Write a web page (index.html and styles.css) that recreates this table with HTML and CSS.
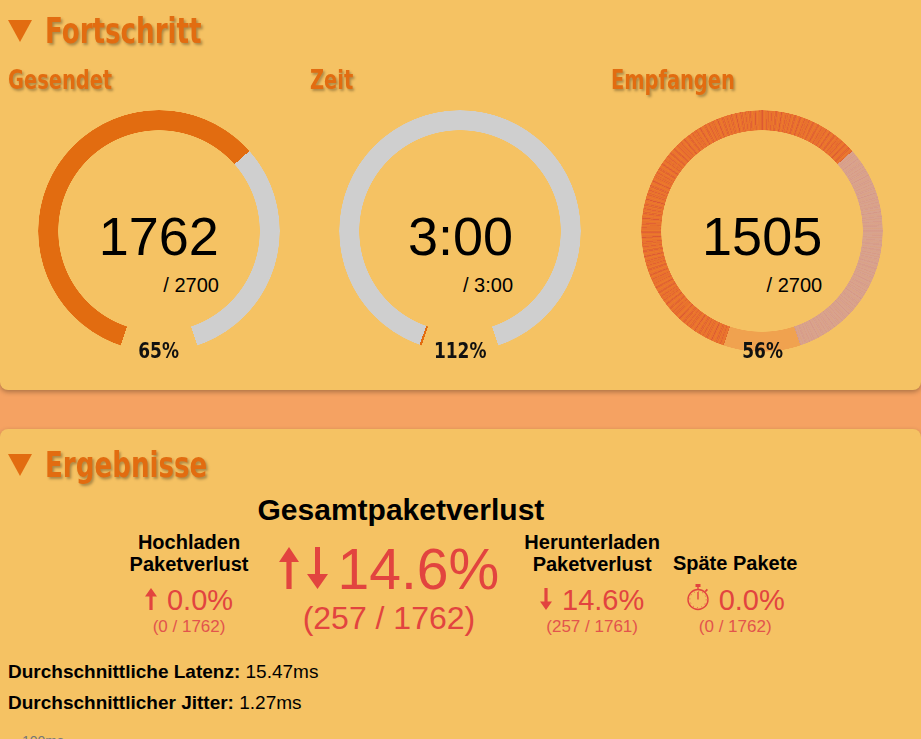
FILE: index.html
```html
<!DOCTYPE html>
<html lang="de">
<head>
<meta charset="utf-8">
<title>Fortschritt</title>
<link rel="stylesheet" href="styles.css">
</head>
<body>
<section class="card card-progress">
  <div class="section-head">
    <svg class="caret" viewBox="0 0 24 22"><polygon points="0,0 24,0 12,22"/></svg>
    <h2 class="section-title">Fortschritt</h2>
  </div>
  <div class="gauges">
    <div class="gauge-col">
      <div class="gauge-label">Gesendet</div>
      <div class="gauge gauge-sent">
        <div class="gauge-value">
          <div class="gauge-big">1762</div>
          <div class="gauge-sub">/ 2700</div>
        </div>
      </div>
      <div class="gauge-pct">65%</div>
    </div>
    <div class="gauge-col">
      <div class="gauge-label">Zeit</div>
      <div class="gauge gauge-time">
        <div class="gauge-value">
          <div class="gauge-big">3:00</div>
          <div class="gauge-sub">/ 3:00</div>
        </div>
      </div>
      <div class="gauge-pct">112%</div>
    </div>
    <div class="gauge-col">
      <div class="gauge-label">Empfangen</div>
      <div class="gauge gauge-recv">
        <div class="gauge-value">
          <div class="gauge-big">1505</div>
          <div class="gauge-sub">/ 2700</div>
        </div>
      </div>
      <div class="gauge-pct">56%</div>
    </div>
  </div>
</section>

<section class="card card-results">
  <div class="section-head">
    <svg class="caret" viewBox="0 0 24 22"><polygon points="0,0 24,0 12,22"/></svg>
    <h2 class="section-title">Ergebnisse</h2>
  </div>
  <div class="loss-row">
    <div class="loss-item loss-up">
      <div class="loss-title">Hochladen<br>Paketverlust</div>
      <div class="loss-value"><svg class="arrow-sm" viewBox="0 0 12 22"><polygon points="6,0 12,8.5 7.6,8.5 7.6,22 4.4,22 4.4,8.5 0,8.5"/></svg>0.0%</div>
      <div class="loss-count">(0 / 1762)</div>
    </div>
    <div class="loss-item loss-total">
      <h3 class="loss-heading">Gesamtpaketverlust</h3>
      <div class="loss-value-big"><svg class="arrow-lg arrow-lg-up" viewBox="0 0 20 42"><polygon points="10,0 20,15 12.6,15 12.6,42 7.4,42 7.4,15 0,15"/></svg><svg class="arrow-lg arrow-lg-down" viewBox="0 0 21 42"><polygon points="8,0 13,0 13,27 21,27 10.5,42 0,27 8,27"/></svg>14.6%</div>
      <div class="loss-count-big">(257 / 1762)</div>
    </div>
    <div class="loss-item loss-down">
      <div class="loss-title">Herunterladen<br>Paketverlust</div>
      <div class="loss-value"><svg class="arrow-sm" viewBox="0 0 12 22"><polygon points="4.4,0 7.6,0 7.6,13.5 12,13.5 6,22 0,13.5 4.4,13.5"/></svg>14.6%</div>
      <div class="loss-count">(257 / 1761)</div>
    </div>
    <div class="loss-item loss-late">
      <div class="loss-title">Späte Pakete</div>
      <div class="loss-value"><svg class="stopwatch" viewBox="0 0 24 28"><rect x="9.5" y="1" width="5" height="3" class="sw-fill"/><line x1="12" y1="4" x2="12" y2="6.5"/><circle cx="12" cy="16.5" r="10"/><circle cx="12" cy="16.5" r="8.2" class="sw-ticks"/><line x1="12" y1="16.5" x2="12" y2="9"/><line x1="19.2" y1="8.6" x2="21.4" y2="6.4" class="sw-knob"/></svg>0.0%</div>
      <div class="loss-count">(0 / 1762)</div>
    </div>
  </div>
  <p class="metric"><b>Durchschnittliche Latenz:</b> 15.47ms</p>
  <p class="metric metric-second"><b>Durchschnittlicher Jitter:</b> 1.27ms</p>
  <div class="chart"><span class="axis-label">100ms</span></div>
</section>
</body>
</html>
```

FILE: styles.css
```css
html, body {
  margin: 0;
  padding: 0;
}

body {
  background: #f5a262;
  font-family: "Liberation Sans", Arial, sans-serif;
  color: #000;
  overflow: hidden;
}

.card {
  background: #f5c263;
  box-shadow: 0 2px 5px rgba(0, 0, 0, 0.3);
  padding: 11px 8px 29px;
}

.card-progress {
  border-radius: 0 0 8px 8px;
}

.card-results {
  margin-top: 39px;
  border-radius: 8px 8px 0 0;
  padding-top: 16px;
  min-height: 400px;
}

.section-head {
  display: flex;
  align-items: center;
  height: 40px;
}

.caret {
  width: 24px;
  height: 22px;
  fill: #e26c10;
  flex: none;
}

.section-title {
  margin: 0 0 0 13px;
  font-family: "DejaVu Sans Condensed", "DejaVu Sans", sans-serif;
  font-weight: bold;
  font-size: 35px;
  line-height: 40px;
  color: #e26c10;
  text-shadow: 2px 2px 3px rgba(0, 0, 0, 0.3);
  transform: scaleX(0.83);
  transform-origin: left center;
  white-space: nowrap;
}

/* gauges */
.gauges {
  display: grid;
  grid-template-columns: repeat(3, 1fr);
  margin-top: 12.6px;
}

.gauge-col {
  display: flex;
  flex-direction: column;
  align-items: center;
}

.gauge-label {
  align-self: stretch;
  font-family: "DejaVu Sans Condensed", "DejaVu Sans", sans-serif;
  font-weight: bold;
  font-size: 27px;
  line-height: 32px;
  color: #e26c10;
  text-shadow: 2px 2px 3px rgba(0, 0, 0, 0.3);
  transform: scaleX(0.8);
  transform-origin: left center;
  white-space: nowrap;
}

.gauge {
  margin-top: 14.4px;
  width: 242px;
  height: 242px;
  box-sizing: border-box;
  padding-top: 95px;
  position: relative;
  display: flex;
  justify-content: center;
  align-items: flex-start;
}

.gauge::before {
  content: "";
  position: absolute;
  inset: 0;
  border-radius: 50%;
  -webkit-mask: radial-gradient(closest-side, transparent calc(100% - 20.5px), #000 calc(100% - 20px), #000 calc(100% - 0.5px), transparent 100%);
  mask: radial-gradient(closest-side, transparent calc(100% - 20.5px), #000 calc(100% - 20px), #000 calc(100% - 0.5px), transparent 100%);
}

.gauge-sent::before {
  background: conic-gradient(#e26c10 0deg 48.5deg, #cfcfcf 48.5deg 161.5deg, transparent 161.5deg 198.5deg, #e26c10 198.5deg 360deg);
}

.gauge-time::before {
  background: conic-gradient(#cfcfcf 0deg 161.5deg, transparent 161.5deg 198.5deg, #e26c10 198.5deg 199.6deg, #cfcfcf 199.6deg 360deg);
}

.gauge-recv::before {
  background:
    conic-gradient(transparent 0deg 48.5deg, rgba(216, 164, 142, 0.72) 48.5deg 161.5deg, #f0a24f 161.5deg 198.5deg, transparent 198.5deg 360deg),
    repeating-conic-gradient(rgba(200, 30, 70, 0.2) 0deg 0.35deg, transparent 0.35deg 1.1deg, rgba(255, 150, 30, 0.18) 1.1deg 1.6deg, transparent 1.6deg 2.3deg),
    repeating-conic-gradient(rgba(190, 40, 40, 0.14) 0deg 0.5deg, transparent 0.5deg 1.7deg, rgba(240, 120, 20, 0.14) 1.7deg 2.2deg, transparent 2.2deg 3.1deg),
    conic-gradient(#e8722f 0deg 48.5deg, #d9a08e 48.5deg 161.5deg, transparent 161.5deg 198.5deg, #e8722f 198.5deg 360deg);
}

.gauge-value {
  position: relative;
  display: flex;
  flex-direction: column;
  align-items: flex-end;
}

.gauge-big {
  font-size: 54px;
  line-height: normal;
}

.gauge-sub {
  font-size: 20px;
  line-height: normal;
  margin-top: 7px;
}

.gauge-pct {
  position: relative;
  margin-top: -11px;
  font-family: "DejaVu Sans Condensed", "DejaVu Sans", sans-serif;
  font-weight: bold;
  font-size: 21px;
  line-height: 20px;
  color: #111;
  transform: scaleX(0.9);
}

/* results */
.loss-row {
  display: flex;
  justify-content: center;
  align-items: flex-end;
  margin-top: 8.4px;
  padding-left: 6px;
}

.loss-item {
  text-align: center;
  flex: none;
}

.loss-up {
  margin-right: 30px;
}

.loss-total {
  margin-right: 25px;
}

.loss-down {
  margin-right: 13px;
}

.loss-title {
  font-weight: bold;
  font-size: 20px;
  line-height: 22px;
  white-space: nowrap;
}

.loss-value {
  margin-top: 9px;
  font-size: 29px;
  line-height: normal;
  color: #e2443f;
  white-space: nowrap;
}

.loss-count {
  font-size: 17px;
  line-height: normal;
  color: #e2544c;
  white-space: nowrap;
}

.loss-heading {
  margin: 0 -45px 0 -21px;
  font-size: 30px;
  line-height: normal;
  font-weight: bold;
  white-space: nowrap;
}

.loss-value-big {
  margin-top: 14px;
  font-size: 57px;
  line-height: 57px;
  color: #e2443f;
  white-space: nowrap;
}

.arrow-lg {
  height: 42px;
  fill: #e2443f;
  vertical-align: baseline;
}

.arrow-lg-up {
  width: 20px;
  margin-right: 8px;
}

.arrow-lg-down {
  width: 21px;
  margin-right: 10px;
}

.arrow-sm {
  width: 12px;
  height: 22px;
  margin-right: 10px;
  fill: #e2443f;
  vertical-align: baseline;
}

.loss-count-big {
  margin-top: 2px;
  font-size: 32px;
  line-height: normal;
  color: #e2443f;
  white-space: nowrap;
}

.stopwatch {
  width: 24px;
  height: 28px;
  margin-right: 9px;
  vertical-align: -1px;
  fill: none;
  stroke: #e2443f;
  stroke-width: 1.4;
}

.stopwatch .sw-fill {
  fill: #e2443f;
  stroke: none;
}

.stopwatch .sw-ticks {
  stroke-width: 1;
  stroke-dasharray: 0.8 3.5;
}

.stopwatch .sw-knob {
  stroke-width: 1.8;
}

.metric {
  margin: 24px 0 0;
  font-size: 19px;
  line-height: 22px;
}

.metric-second {
  margin-top: 9px;
}

.chart {
  margin-top: 20px;
  height: 120px;
}

.axis-label {
  display: block;
  padding-left: 14px;
  font-size: 14px;
  line-height: 14px;
  color: #777;
}
```
